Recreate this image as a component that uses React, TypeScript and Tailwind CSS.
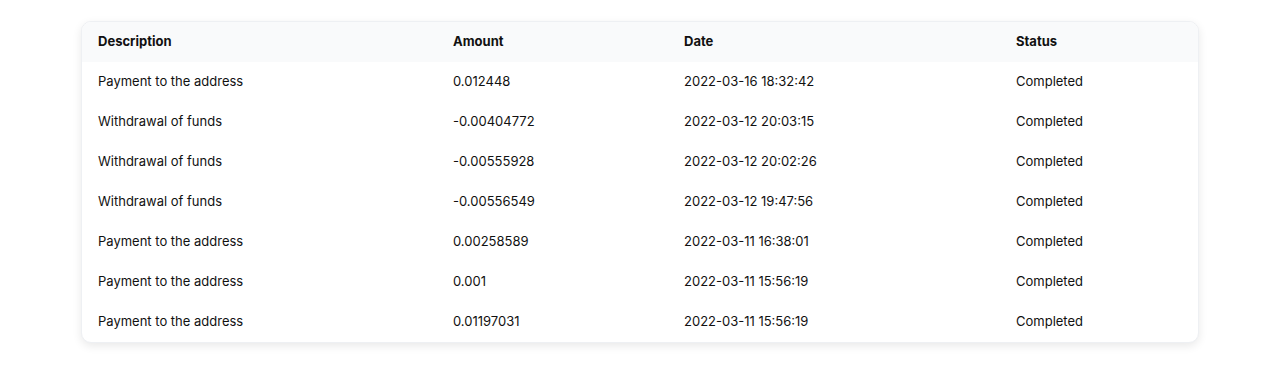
import React from "react"

interface Transaction {
	description: string
	amount: string
	date: string
	status: string
}

const transactions: Transaction[] = [
	{ description: "Payment to the address", amount: "0.012448", date: "2022-03-16 18:32:42", status: "Completed" },
	{ description: "Withdrawal of funds", amount: "-0.00404772", date: "2022-03-12 20:03:15", status: "Completed" },
	{ description: "Withdrawal of funds", amount: "-0.00555928", date: "2022-03-12 20:02:26", status: "Completed" },
	{ description: "Withdrawal of funds", amount: "-0.00556549", date: "2022-03-12 19:47:56", status: "Completed" },
	{ description: "Payment to the address", amount: "0.00258589", date: "2022-03-11 16:38:01", status: "Completed" },
	{ description: "Payment to the address", amount: "0.001", date: "2022-03-11 15:56:19", status: "Completed" },
	{ description: "Payment to the address", amount: "0.01197031", date: "2022-03-11 15:56:19", status: "Completed" },
]

export default function App() {
	return (
		<div className="min-h-screen bg-white pt-[21px] px-[81px] font-['Inter',sans-serif] text-[13px] text-[#111]">
			<div className="rounded-[10px] border border-[#eef0f3] bg-white shadow-[0_3px_10px_rgba(0,0,0,0.09)] overflow-hidden">
				<table className="w-full table-fixed border-collapse">
					<colgroup>
						<col className="w-[371px]" />
						<col className="w-[231px]" />
						<col className="w-[332px]" />
						<col />
					</colgroup>
					<thead>
						<tr className="h-10 bg-[#f9fafb]">
							<th className="pl-4 text-left font-bold">Description</th>
							<th className="text-left font-bold">Amount</th>
							<th className="text-left font-bold">Date</th>
							<th className="text-left font-bold">Status</th>
						</tr>
					</thead>
					<tbody>
						{transactions.map((t, i) => (
							<tr key={i} className="h-10">
								<td className="pl-4">{t.description}</td>
								<td>{t.amount}</td>
								<td>{t.date}</td>
								<td>{t.status}</td>
							</tr>
						))}
					</tbody>
				</table>
			</div>
		</div>
	)
}
